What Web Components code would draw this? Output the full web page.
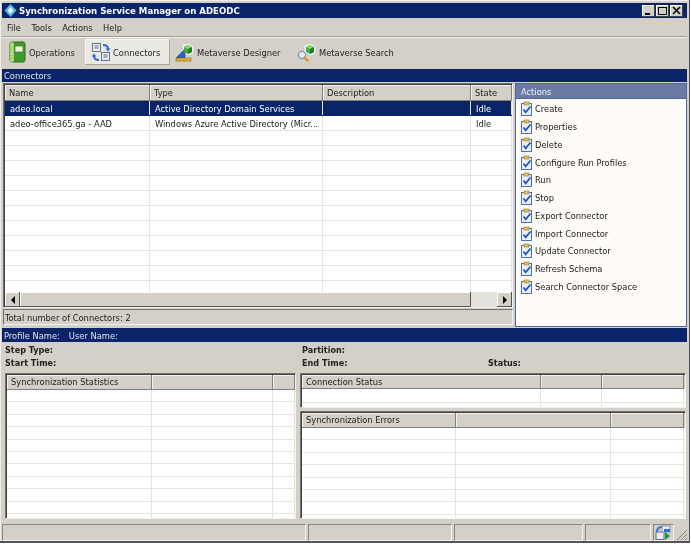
<!DOCTYPE html>
<html>
<head>
<meta charset="utf-8">
<title>Synchronization Service Manager</title>
<style>
  html, body { margin: 0; padding: 0; background: #fff; }
  body { font: 9.25px "DejaVu Sans Condensed", "DejaVu Sans", sans-serif; font-stretch: condensed; color: #222; overflow: hidden; }
</style>
</head>
<body>

<app-window>
  <title-bar slot="title">Synchronization Service Manager on ADEODC</title-bar>
  <menu-bar slot="menu">
    <span>File</span><span>Tools</span><span>Actions</span><span>Help</span>
  </menu-bar>
  <nav-toolbar slot="toolbar">
    <nav-button icon="operations" style="width:78px;padding-left:2px">Operations</nav-button>
    <nav-button icon="connectors" active style="width:85px">Connectors</nav-button>
    <nav-button icon="designer" style="width:122px">Metaverse Designer</nav-button>
    <nav-button icon="search">Metaverse Search</nav-button>
  </nav-toolbar>

  <section-bar slot="connectors-title">Connectors</section-bar>
  <connector-view slot="connectors">
    <data-grid slot="list" columns="Name:145,Type:173,Description:148,State:41" row-height="15" header-height="16" blank="11" scrollbar>
      <grid-row selected>
        <grid-cell>adeo.local</grid-cell><grid-cell>Active Directory Domain Services</grid-cell><grid-cell></grid-cell><grid-cell>Idle</grid-cell>
      </grid-row>
      <grid-row>
        <grid-cell>adeo-office365.ga - AAD</grid-cell><grid-cell>Windows Azure Active Directory (Micr...</grid-cell><grid-cell></grid-cell><grid-cell>Idle</grid-cell>
      </grid-row>
    </data-grid>
    <status-line slot="list">Total number of Connectors: 2</status-line>
    <actions-panel slot="actions" heading="Actions">
      <action-item>Create</action-item>
      <action-item>Properties</action-item>
      <action-item>Delete</action-item>
      <action-item>Configure Run Profiles</action-item>
      <action-item>Run</action-item>
      <action-item>Stop</action-item>
      <action-item>Export Connector</action-item>
      <action-item>Import Connector</action-item>
      <action-item>Update Connector</action-item>
      <action-item>Refresh Schema</action-item>
      <action-item>Search Connector Space</action-item>
    </actions-panel>
  </connector-view>

  <section-bar slot="profile-title" style="height:14px"><span style="margin-right:9px">Profile Name:</span><span>User Name:</span></section-bar>
  <step-info slot="step">
    <b>Step Type:</b><b>Partition:</b><b></b>
    <b>Start Time:</b><b>End Time:</b><b>Status:</b>
  </step-info>
  <profile-view slot="profile">
    <data-grid slot="left" columns="Synchronization Statistics:145,:121,:22" row-height="12.4" header-height="15" blank="11"></data-grid>
    <data-grid slot="right" style="flex:none;height:35px" columns="Connection Status:239,:61,:82" row-height="14" header-height="14" blank="2"></data-grid>
    <data-grid slot="right" columns="Synchronization Errors:154,:155,:73" row-height="12.4" header-height="15" blank="8"></data-grid>
  </profile-view>
  <status-bar slot="status"></status-bar>
</app-window>

<script>
// 小さいアイコンはここにまとめておく
const ICONS = {
  operations: `<svg width="18" height="22" viewBox="0 0 18 22">
    <rect x="1" y="1" width="15" height="20" rx="2" fill="#3f9a2c" stroke="#2a6f1c"/>
    <rect x="1" y="1" width="4" height="20" rx="1.5" fill="#9ad466"/>
    <path d="M2 4h2M2 7h2M2 10h2M2 13h2M2 16h2M2 19h2" stroke="#e8e2a0" stroke-width="1"/>
    <rect x="6" y="5" width="8" height="6" rx="1" fill="#eaf7dc" stroke="#2a6f1c" stroke-width=".6"/>
  </svg>`,
  connectors: `<svg width="20" height="22" viewBox="0 0 20 22">
    <rect x="1.5" y="2.5" width="8" height="8" fill="#e8ebf2" stroke="#69748c"/>
    <rect x="10.5" y="11.5" width="8" height="8" fill="#e8ebf2" stroke="#69748c"/>
    <path d="M3.5 5h4M3.5 7h4M12.5 14h4M12.5 16h4" stroke="#6b6f78" stroke-width="1"/>
    <path d="M12 4c3 0 5 1 5 4" fill="none" stroke="#2f6fd0" stroke-width="2"/>
    <path d="M14.5 7.5h5l-2.5 3z" fill="#2f6fd0"/>
    <path d="M8 19c-3 0-5-1-5-4" fill="none" stroke="#2f6fd0" stroke-width="2"/>
    <path d="M.5 15.5h5l-2.5-3z" fill="#2f6fd0"/>
  </svg>`,
  designer: `<svg width="20" height="20" viewBox="0 0 20 20">
    <path d="M7 2l7-1 5 3v7l-5 3-7-3z" fill="#eef0f4" stroke="#b9bec9" stroke-width=".7"/>
    <path d="M1 16L10 7v9z" fill="#2f62c8" stroke="#1c3f8c" stroke-width=".6"/>
    <rect x="1" y="16" width="15" height="3" fill="#e0b030" stroke="#8a6a14" stroke-width=".6"/>
    <path d="M9 5l4-2 4 2v5l-4 2-4-2z" fill="#3fae36"/>
    <path d="M9 5l4 2 4-2-4-2z" fill="#8ed868"/>
    <path d="M13 7v5l4-2V5z" fill="#24801f"/>
  </svg>`,
  search: `<svg width="20" height="20" viewBox="0 0 20 20">
    <path d="M7 3l6-2 6 3v7l-5 3-7-3z" fill="#eef0f4" stroke="#b9bec9" stroke-width=".7"/>
    <path d="M9 5l4-2 4 2v5l-4 2-4-2z" fill="#3fae36"/>
    <path d="M9 5l4 2 4-2-4-2z" fill="#8ed868"/>
    <path d="M13 7v5l4-2V5z" fill="#24801f"/>
    <circle cx="5" cy="13" r="3.6" fill="#dfe9f6" stroke="#7f93b5" stroke-width="1.2"/>
    <path d="M7.5 15.5l3 3" stroke="#d8912a" stroke-width="2.2" stroke-linecap="round"/>
  </svg>`,
  action: `<svg width="14" height="15" viewBox="0 0 14 15">
    <rect x="1.5" y="2.5" width="10" height="12" fill="#e9effb" stroke="#4a70c0"/>
    <rect x="4" y="1" width="5" height="3" fill="#e4c25a" stroke="#a5882c" stroke-width=".7"/>
    <path d="M3.5 8.5l2.2 2.8L10.5 5.5" fill="none" stroke="#2450b4" stroke-width="1.7"/>
  </svg>`,
  run: `<svg width="18" height="15" viewBox="0 0 18 15">
    <rect x="2" y="7" width="8" height="7.5" fill="#e8ebf2" stroke="#5c6f96"/>
    <rect x="8" y="1" width="8" height="6" fill="#e8ebf2" stroke="#8e99ad"/>
    <path d="M3 7c0-3 2-5 5-5" fill="none" stroke="#2f6fd0" stroke-width="2"/>
    <path d="M10 4h6v3h-6z" fill="#2f6fd0"/>
    <path d="M11 7l5 4-5 4z" fill="#1f9a3a"/>
  </svg>`
};

// ウィンドウ全体の枠
class AppWindow extends HTMLElement {
  constructor() {
    super();
    this.attachShadow({ mode: 'open' });
    this.shadowRoot.innerHTML = `
      <style>
        :host {
          display: flex;
          flex-direction: column;
          box-sizing: border-box;
          width: 690px;
          height: 543px;
          padding: 3px 2px 0 2px;
          background: #d4d0c8;
          border-right: 1px solid #555;
          border-bottom: 2px solid #555;
          box-shadow: inset 1px 1px 0 #f0eee8;
          filter: blur(.35px);
        }
        ::slotted(*) { flex: none; }
        .rule { flex: none; height: 1px; background: #a09c94; border-bottom: 1px solid #f4f2ec; }
      </style>
      <slot name="title"></slot>
      <slot name="menu"></slot>
      <div class="rule"></div>
      <slot name="toolbar"></slot>
      <slot name="connectors-title"></slot>
      <slot name="connectors"></slot>
      <slot name="profile-title"></slot>
      <slot name="step"></slot>
      <slot name="profile"></slot>
      <slot name="status"></slot>
    `;
  }
}
customElements.define('app-window', AppWindow);

class TitleBar extends HTMLElement {
  constructor() {
    super();
    this.attachShadow({ mode: 'open' });
    this.shadowRoot.innerHTML = `
      <style>
        :host {
          display: flex;
          align-items: center;
          gap: 1px;
          height: 15px;
          padding: 0 4px 0 1px;
          background: #0a246a;
          color: #fff;
          font-weight: bold;
          font-size: 9.55px;
        }
        .text { flex: 1; white-space: nowrap; }
        .btn {
          display: flex;
          align-items: center;
          justify-content: center;
          box-sizing: border-box;
          width: 13px;
          height: 12px;
          background: #d4d0c8;
          box-shadow: inset -1px -1px 0 #444, inset 1px 1px 0 #fff;
        }
        .btns { display: flex; gap: 1px; }
      </style>
      <svg width="15" height="15" viewBox="0 0 15 15">
        <path d="M7.5 1l6 6.5-6 6.5-6-6.5z" fill="#55b5ea"/>
        <path d="M7.5 4l3 3.5-3 3.5-3-3.5z" fill="#e6f6ff"/>
      </svg>
      <span class="text"><slot></slot></span>
      <span class="btns">
        <span class="btn"><svg width="9" height="9"><path d="M1 7h5v2H1z" fill="#000"/></svg></span>
        <span class="btn"><svg width="9" height="9"><path d="M.5 1.5h8v7h-8z" fill="none" stroke="#000"/><path d="M0 1h9v1H0z"/></svg></span>
        <span class="btn"><svg width="9" height="9"><path d="M1 1l7 7M8 1L1 8" stroke="#000" stroke-width="1.6"/></svg></span>
      </span>
    `;
  }
}
customElements.define('title-bar', TitleBar);

class MenuBar extends HTMLElement {
  constructor() {
    super();
    this.attachShadow({ mode: 'open' });
    this.shadowRoot.innerHTML = `
      <style>
        :host {
          display: flex;
          align-items: center;
          gap: 10.5px;
          height: 18px;
          padding: 0 0 0 5px;
        }
      </style>
      <slot></slot>
    `;
  }
}
customElements.define('menu-bar', MenuBar);

class NavToolbar extends HTMLElement {
  constructor() {
    super();
    this.attachShadow({ mode: 'open' });
    this.shadowRoot.innerHTML = `
      <style>
        :host {
          display: flex;
          align-items: flex-start;
          height: 31px;
          padding: 1px 0 0 5px;
          box-sizing: border-box;
        }
      </style>
      <slot></slot>
    `;
  }
}
customElements.define('nav-toolbar', NavToolbar);

class NavButton extends HTMLElement {
  constructor() {
    super();
    this.attachShadow({ mode: 'open' });
  }

  connectedCallback() {
    const icon = ICONS[this.getAttribute('icon')] || '';
    this.shadowRoot.innerHTML = `
      <style>
        :host {
          display: flex;
          align-items: center;
          gap: 2px;
          box-sizing: border-box;
          height: 26px;
          padding: 0 0 0 5px;
          white-space: nowrap;
          flex: none;
        }
        :host([active]) {
          background: #ebe9e4;
          border: 1px solid #f6f5f1;
          border-right-color: #a8a49c;
          border-bottom-color: #a8a49c;
        }
        svg { display: block; }
      </style>
      ${icon}<slot></slot>
    `;
  }
}
customElements.define('nav-button', NavButton);

class SectionBar extends HTMLElement {
  constructor() {
    super();
    this.attachShadow({ mode: 'open' });
    this.shadowRoot.innerHTML = `
      <style>
        :host {
          display: flex;
          align-items: center;
          height: 13px;
          padding: 0 2px;
          background: #0a246a;
          color: #dfe3ee;
        }
      </style>
      <slot></slot>
    `;
  }
}
customElements.define('section-bar', SectionBar);

// 上段: コネクタ一覧とアクション
class ConnectorView extends HTMLElement {
  constructor() {
    super();
    this.attachShadow({ mode: 'open' });
    this.shadowRoot.innerHTML = `
      <style>
        :host {
          display: grid;
          grid-template-columns: 510px 172px;
          gap: 2px;
          height: 246px;
          padding: 1px 1px 0 1px;
          box-sizing: border-box;
        }
        .list { display: flex; flex-direction: column; gap: 1px; min-height: 0; padding-bottom: 3px; }
      </style>
      <div class="list"><slot name="list"></slot></div>
      <slot name="actions"></slot>
    `;
  }
}
customElements.define('connector-view', ConnectorView);

class DataGrid extends HTMLElement {
  constructor() {
    super();
    this.attachShadow({ mode: 'open' });
  }

  connectedCallback() {
    const cols = this.getAttribute('columns').split(',').map(c => c.split(':'));
    const blank = parseInt(this.getAttribute('blank') || '0', 10);
    const rowH = this.getAttribute('row-height') || '15';
    const headH = this.getAttribute('header-height') || '16';
    const track = cols.map(c => c[1] + 'px').join(' ');
    const emptyRow = `<grid-row>${cols.map(() => '<grid-cell></grid-cell>').join('')}</grid-row>`;
    const bar = this.hasAttribute('scrollbar') ? '<h-scrollbar></h-scrollbar>' : '';

    this.shadowRoot.innerHTML = `
      <style>
        :host {
          display: flex;
          flex-direction: column;
          flex: 1;
          min-height: 0;
          box-sizing: border-box;
          background: #fff;
          border: 1px solid;
          border-color: #707070 #f4f2ec #f4f2ec #707070;
          box-shadow: inset 1px 1px 0 #404040;
          padding: 1px 0 0 1px;
          overflow: hidden;
          --cols: ${track};
          --row-h: ${rowH}px;
        }
        .head {
          display: grid;
          grid-template-columns: var(--cols);
          flex: none;
          height: ${headH}px;
          background: #d4d0c8;
        }
        .head div {
          box-sizing: border-box;
          padding: 0 4px 1px;
          display: flex;
          align-items: center;
          white-space: nowrap;
          overflow: hidden;
          border-right: 1px solid #808080;
          border-bottom: 1px solid #808080;
          box-shadow: inset 1px 1px 0 #f4f2ec;
        }
        .rows { flex: 1; min-height: 0; overflow: hidden; }
      </style>
      <div class="head">${cols.map(c => `<div>${c[0]}</div>`).join('')}</div>
      <div class="rows"><slot></slot>${emptyRow.repeat(blank)}</div>
      ${bar}
    `;
  }
}
customElements.define('data-grid', DataGrid);

class GridRow extends HTMLElement {
  constructor() {
    super();
    this.attachShadow({ mode: 'open' });
    this.shadowRoot.innerHTML = `
      <style>
        :host {
          display: grid;
          grid-template-columns: var(--cols);
          box-sizing: border-box;
          height: var(--row-h);
          border-bottom: 1px solid #e6e4df;
        }
        :host([selected]) { background: #0a246a; color: #fff; border-bottom-color: #0a246a; }
      </style>
      <slot></slot>
    `;
  }
}
customElements.define('grid-row', GridRow);

class GridCell extends HTMLElement {
  constructor() {
    super();
    this.attachShadow({ mode: 'open' });
    this.shadowRoot.innerHTML = `
      <style>
        :host {
          display: flex;
          align-items: center;
          box-sizing: border-box;
          padding: 1px 0 0 5px;
          white-space: nowrap;
          overflow: hidden;
          border-right: 1px solid #e6e4df;
        }
      </style>
      <slot></slot>
    `;
  }
}
customElements.define('grid-cell', GridCell);

class HScrollbar extends HTMLElement {
  constructor() {
    super();
    this.attachShadow({ mode: 'open' });
    this.shadowRoot.innerHTML = `
      <style>
        :host {
          display: flex;
          flex: none;
          height: 15px;
          background: #e4e2dc;
        }
        .btn, .thumb {
          box-sizing: border-box;
          background: #d4d0c8;
          box-shadow: inset -1px -1px 0 #555, inset 1px 1px 0 #fff;
        }
        .btn { flex: none; width: 15px; display: flex; align-items: center; justify-content: center; }
        .thumb { flex: none; width: 451px; }
        .track { flex: 1; }
      </style>
      <div class="btn"><svg width="6" height="8"><path d="M5 0v8L1 4z"/></svg></div>
      <div class="thumb"></div>
      <div class="track"></div>
      <div class="btn"><svg width="6" height="8"><path d="M1 0v8l4-4z"/></svg></div>
    `;
  }
}
customElements.define('h-scrollbar', HScrollbar);

class StatusLine extends HTMLElement {
  constructor() {
    super();
    this.attachShadow({ mode: 'open' });
    this.shadowRoot.innerHTML = `
      <style>
        :host {
          display: flex;
          align-items: center;
          flex: none;
          box-sizing: border-box;
          height: 16px;
          padding: 0 1px;
          border: 1px solid;
          border-color: #707070 #f4f2ec #f4f2ec #707070;
        }
      </style>
      <slot></slot>
    `;
  }
}
customElements.define('status-line', StatusLine);

class ActionsPanel extends HTMLElement {
  constructor() {
    super();
    this.attachShadow({ mode: 'open' });
  }

  connectedCallback() {
    this.shadowRoot.innerHTML = `
      <style>
        :host {
          display: flex;
          flex-direction: column;
          box-sizing: border-box;
          height: 244px;
          background: #fffcf7;
          border: 1px solid #4d659e;
        }
        .head {
          display: flex;
          align-items: center;
          box-sizing: border-box;
          height: 15px;
          padding: 0 5px;
          background: #6b7aa3;
          color: #f0f2f8;
          border-bottom: 1px solid #4d659e;
          flex: none;
        }
        .list { padding: 1px 0 0 4px; display: flex; flex-direction: column; }
      </style>
      <div class="head">${this.getAttribute('heading') || ''}</div>
      <div class="list"><slot></slot></div>
    `;
  }
}
customElements.define('actions-panel', ActionsPanel);

class ActionItem extends HTMLElement {
  constructor() {
    super();
    this.attachShadow({ mode: 'open' });
    this.shadowRoot.innerHTML = `
      <style>
        :host {
          display: flex;
          align-items: center;
          gap: 1px;
          height: 17.75px;
          white-space: nowrap;
        }
        svg { display: block; flex: none; }
      </style>
      ${ICONS.action}<slot></slot>
    `;
  }
}
customElements.define('action-item', ActionItem);

class StepInfo extends HTMLElement {
  constructor() {
    super();
    this.attachShadow({ mode: 'open' });
    this.shadowRoot.innerHTML = `
      <style>
        :host {
          display: grid;
          grid-template-columns: 297px 186px 1fr;
          grid-auto-rows: 13px;
          align-items: center;
          height: 31px;
          padding: 1px 0 0 3px;
          box-sizing: border-box;
          font-size: 9px;
        }
      </style>
      <slot></slot>
    `;
  }
}
customElements.define('step-info', StepInfo);

// 下段: 統計と接続状態
class ProfileView extends HTMLElement {
  constructor() {
    super();
    this.attachShadow({ mode: 'open' });
    this.shadowRoot.innerHTML = `
      <style>
        :host {
          display: grid;
          grid-template-columns: 291px 386px;
          gap: 4px;
          height: 146px;
          padding: 0 0 0 3px;
        }
        .col { display: flex; min-height: 0; }
        .stack { flex-direction: column; gap: 3px; }
      </style>
      <div class="col"><slot name="left"></slot></div>
      <div class="col stack"><slot name="right"></slot></div>
    `;
  }
}
customElements.define('profile-view', ProfileView);

class StatusBar extends HTMLElement {
  constructor() {
    super();
    this.attachShadow({ mode: 'open' });
    this.shadowRoot.innerHTML = `
      <style>
        :host {
          display: grid;
          grid-template-columns: 304px 144px 129px 66px 21px 1fr;
          gap: 2px;
          height: 17px;
          margin-top: 5px;
        }
        .pane {
          box-sizing: border-box;
          border: 1px solid;
          border-color: #8a8780 #f4f2ec #f4f2ec #8a8780;
          overflow: hidden;
        }
        .grip { align-self: end; justify-self: end; display: block; }
      </style>
      <div class="pane"></div>
      <div class="pane"></div>
      <div class="pane"></div>
      <div class="pane"></div>
      <div class="pane">${ICONS.run}</div>
      <svg class="grip" width="12" height="12"><path d="M11 1L1 11M11 5L5 11M11 9L9 11" stroke="#8a8780"/></svg>
    `;
  }
}
customElements.define('status-bar', StatusBar);
</script>
</body>
</html>
